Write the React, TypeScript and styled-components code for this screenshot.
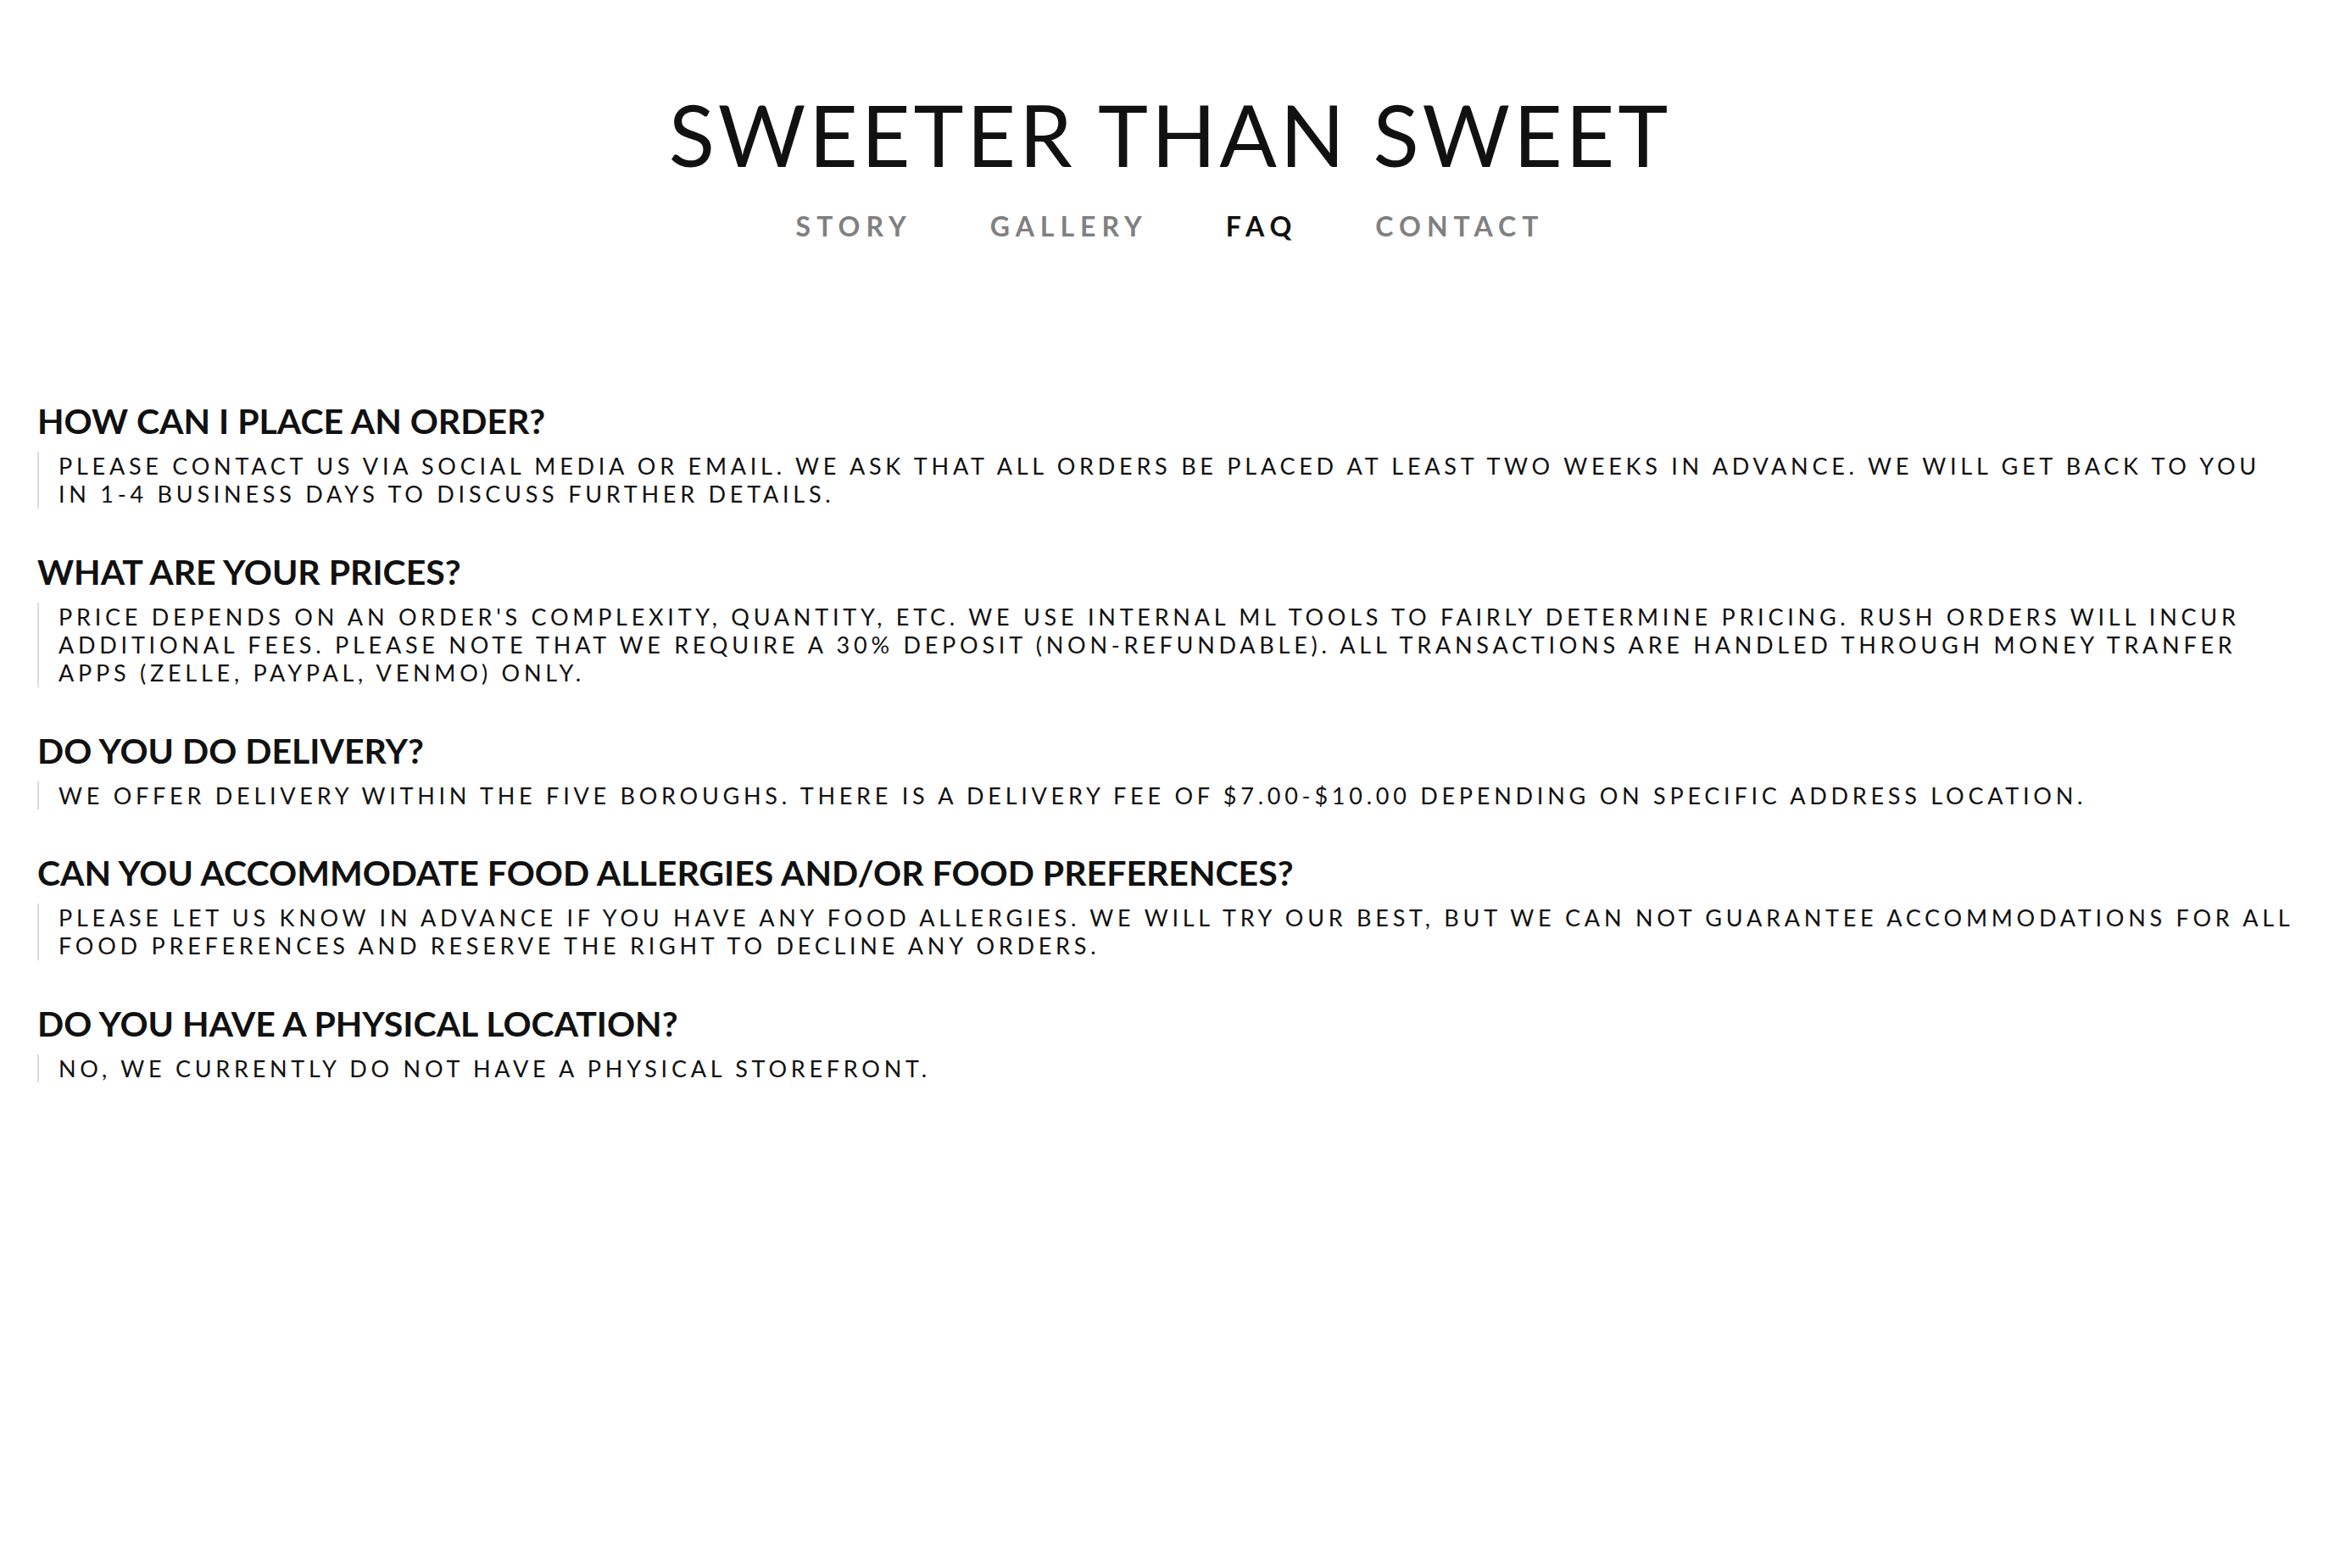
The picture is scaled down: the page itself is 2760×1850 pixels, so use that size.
import React from "react";
import styled, { createGlobalStyle } from "styled-components";

const Global = createGlobalStyle`
  html, body { margin: 0; padding: 0; background: #fff; }
  body { font-family: Lato, "Noto Sans", sans-serif; color: #111; }
`;

const Page = styled.div`
  min-height: 1850px;
  display: flex;
  flex-direction: column;
`;

const Header = styled.header`
  padding-top: 98px;
  display: flex;
  flex-direction: column;
  align-items: center;
`;

const Title = styled.h1`
  margin: 0;
  font-family: Lato, sans-serif;
  font-weight: 400;
  font-size: 100px;
  line-height: 120px;
  letter-spacing: 3.9px;
  color: #111;
`;

const Nav = styled.nav`
  margin-top: 30px;
  display: flex;
  gap: 92px;
`;

const NavLink = styled.a<{ $active?: boolean }>`
  font-family: Lato, sans-serif;
  font-weight: 700;
  font-size: 32px;
  line-height: 38px;
  letter-spacing: 7px;
  text-decoration: none;
  color: ${(p) => (p.$active ? "#111" : "#808080")};
`;

const Main = styled.main`
  padding: 186px 48px 0 44px;
  display: flex;
  flex-direction: column;
  gap: 50px;
`;

const Item = styled.section`
  display: flex;
  flex-direction: column;
  gap: 11px;
`;

const Question = styled.h3`
  margin: 0;
  font-family: Lato, sans-serif;
  font-weight: 700;
  font-size: 41px;
  line-height: 50px;
  color: #111;
`;

const Answer = styled.blockquote`
  margin: 0;
  border-left: 2px solid #dcdcdc;
  padding-left: 23px;
  font-family: Lato, sans-serif;
  font-weight: 400;
  font-size: 27px;
  line-height: 33.33px;
  letter-spacing: 4.75px;
  text-transform: uppercase;
  color: #111;
`;

const faqs = [
  {
    q: "HOW CAN I PLACE AN ORDER?",
    a: "Please contact us via social media or email. We ask that all orders be placed at least two weeks in advance. We will get back to you in 1-4 business days to discuss further details.",
  },
  {
    q: "WHAT ARE YOUR PRICES?",
    a: "Price depends on an order's complexity, quantity, etc. We use internal ML tools to fairly determine pricing. Rush orders will incur additional fees. Please note that we require a 30% deposit (non-refundable). All transactions are handled through money tranfer apps (Zelle, PayPal, Venmo) only.",
  },
  {
    q: "DO YOU DO DELIVERY?",
    a: "We offer delivery within the five boroughs. There is a delivery fee of $7.00-$10.00 depending on specific address location.",
  },
  {
    q: "CAN YOU ACCOMMODATE FOOD ALLERGIES AND/OR FOOD PREFERENCES?",
    a: "Please let us know in advance if you have any food allergies. We will try our best, but we can not guarantee accommodations for all food preferences and reserve the right to decline any orders.",
  },
  {
    q: "DO YOU HAVE A PHYSICAL LOCATION?",
    a: "No, we currently do not have a physical storefront.",
  },
];

export default function App() {
  return (
    <Page>
      <Global />
      <Header>
        <Title>SWEETER THAN SWEET</Title>
        <Nav>
          <NavLink href="#">STORY</NavLink>
          <NavLink href="#">GALLERY</NavLink>
          <NavLink href="#" $active>FAQ</NavLink>
          <NavLink href="#">CONTACT</NavLink>
        </Nav>
      </Header>
      <Main>
        {faqs.map((f, i) => (
          <Item key={i}>
            <Question>{f.q}</Question>
            <Answer>{f.a}</Answer>
          </Item>
        ))}
      </Main>
    </Page>
  );
}
